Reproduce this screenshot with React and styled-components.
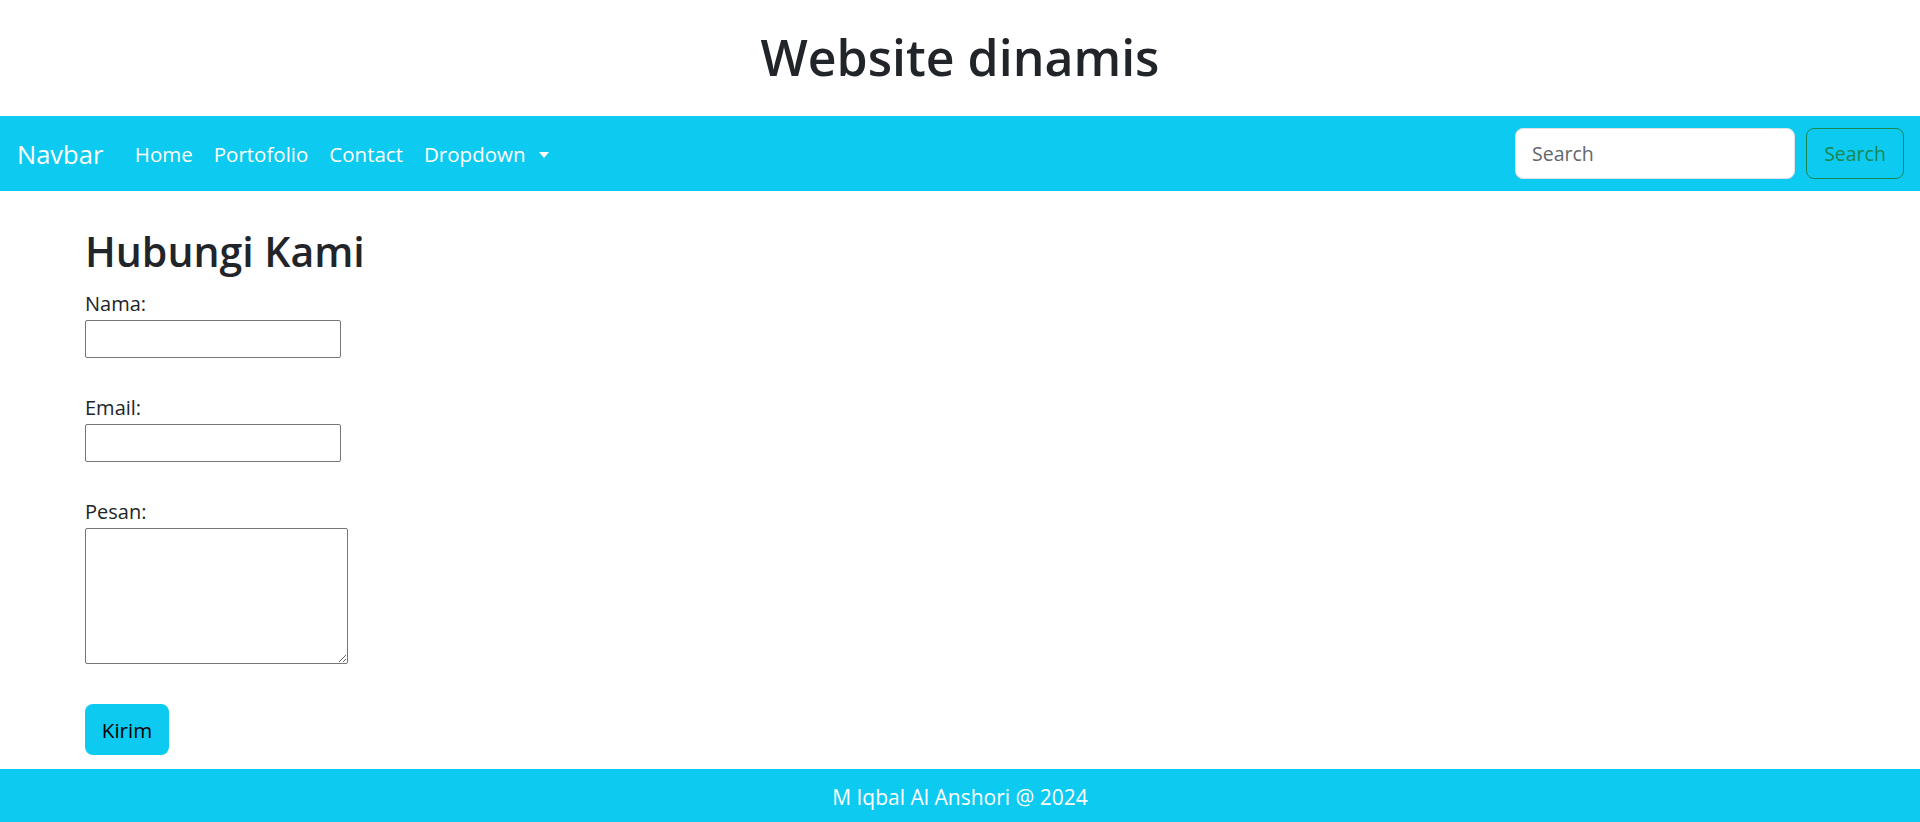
import React from "react";
import styled, { createGlobalStyle } from "styled-components";

const GlobalStyle = createGlobalStyle`
  * { box-sizing: border-box; }
  body {
    margin: 0;
    font-family: "Open Sans", "Noto Sans", sans-serif;
    color: #212529;
    background: #fff;
  }
`;

const Page = styled.div`
  display: flex;
  flex-direction: column;
  min-height: 822px;
`;

const Header = styled.header`
  height: 116px;
  display: flex;
  align-items: center;
  justify-content: center;
`;

const Title = styled.h1`
  margin: 0;
  font-size: 50px;
  font-weight: 600;
  line-height: 1.2;
  padding-bottom: 2px;
`;

const Navbar = styled.nav`
  height: 75px;
  background: #0dcaf0;
  display: flex;
  align-items: center;
  padding: 0 16px 0 17px;
`;

const Brand = styled.a`
  color: #fff;
  font-size: 25.5px;
  margin-right: 21px;
  text-decoration: none;
`;

const NavList = styled.ul`
  display: flex;
  list-style: none;
  margin: 0;
  padding: 0;
`;

const NavLink = styled.a`
  display: flex;
  align-items: center;
  color: #fff;
  font-size: 20.5px;
  padding: 0 10.5px;
  text-decoration: none;
`;

const Caret = styled.span`
  display: inline-block;
  margin-left: 14px;
  margin-top: 2px;
  border-top: 6px solid #fff;
  border-left: 5px solid transparent;
  border-right: 5px solid transparent;
`;

const SearchForm = styled.form`
  margin-left: auto;
  display: flex;
  gap: 11px;
`;

const SearchInput = styled.input`
  width: 280px;
  height: 51px;
  border: 1px solid #dee2e6;
  border-radius: 8px;
  padding: 0 16px;
  font-family: inherit;
  font-size: 19.5px;
  color: #212529;
  background: #fff;
  &::placeholder { color: #62676c; }
  outline: none;
`;

const OutlineButton = styled.button`
  width: 98px;
  height: 51px;
  border: 1px solid #198754;
  border-radius: 8px;
  background: transparent;
  color: #198754;
  font-family: inherit;
  font-size: 19.5px;
  padding: 0;
`;

const Main = styled.main`
  flex: 1;
  padding: 36px 0 14px 85px;
`;

const Heading = styled.h2`
  margin: 0 0 13px;
  font-size: 41px;
  font-weight: 600;
  line-height: 1.2;
`;

const Form = styled.form`
  display: flex;
  flex-direction: column;
  align-items: flex-start;
`;

const Field = styled.div`
  display: flex;
  flex-direction: column;
  align-items: flex-start;
  margin-bottom: ${(p) => p.$gap}px;
`;

const Label = styled.label`
  font-size: 20px;
  line-height: 30px;
  margin-bottom: 1px;
`;

const TextInput = styled.input`
  width: 256px;
  height: 38px;
  border: 1px solid #767676;
  border-radius: 2px;
  margin: 0;
  padding: 1px 2px;
`;

const TextArea = styled.textarea`
  width: 263px;
  height: 136px;
  border: 1px solid #767676;
  border-radius: 2px;
  margin: 0;
  padding: 2px;
`;

const SubmitButton = styled.button`
  width: 84px;
  height: 51px;
  border: none;
  border-radius: 8px;
  background: #0dcaf0;
  color: #000;
  font-family: inherit;
  font-size: 20.5px;
  padding: 0;
`;

const Footer = styled.footer`
  background: #0dcaf0;
  color: #fff;
  text-align: center;
  font-size: 21px;
  line-height: 30px;
  padding: 13px 0;
`;

export default function App() {
  return (
    <Page>
      <GlobalStyle />
      <Header>
        <Title>Website dinamis</Title>
      </Header>
      <Navbar>
        <Brand href="#">Navbar</Brand>
        <NavList>
          <li><NavLink href="#">Home</NavLink></li>
          <li><NavLink href="#">Portofolio</NavLink></li>
          <li><NavLink href="#">Contact</NavLink></li>
          <li>
            <NavLink href="#">
              Dropdown<Caret />
            </NavLink>
          </li>
        </NavList>
        <SearchForm onSubmit={(e) => e.preventDefault()}>
          <SearchInput type="search" placeholder="Search" />
          <OutlineButton type="submit">Search</OutlineButton>
        </SearchForm>
      </Navbar>
      <Main>
        <Heading>Hubungi Kami</Heading>
        <Form onSubmit={(e) => e.preventDefault()}>
          <Field $gap={35}>
            <Label htmlFor="nama">Nama:</Label>
            <TextInput id="nama" type="text" />
          </Field>
          <Field $gap={35}>
            <Label htmlFor="email">Email:</Label>
            <TextInput id="email" type="email" />
          </Field>
          <Field $gap={40}>
            <Label htmlFor="pesan">Pesan:</Label>
            <TextArea id="pesan" />
          </Field>
          <SubmitButton type="submit">Kirim</SubmitButton>
        </Form>
      </Main>
      <Footer>M Iqbal Al Anshori @ 2024</Footer>
    </Page>
  );
}
